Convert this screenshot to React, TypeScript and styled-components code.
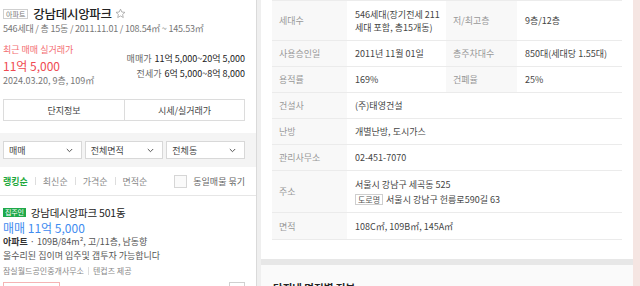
import styled, { createGlobalStyle } from "styled-components";

const Global = createGlobalStyle`
  html, body { margin: 0; padding: 0; background: #fff; }
  body {
    font-family: "Noto Sans CJK KR", "Noto Sans", sans-serif;
    color: #333;
    -webkit-font-smoothing: antialiased;
  }
`;

const Page = styled.div`
  display: flex;
  width: 640px;
  height: 286px;
  overflow: hidden;
`;

/* ---------- left: complex summary + listings ---------- */

const Left = styled.aside`
  width: 256px;
  flex-shrink: 0;
  border-right: 1px solid #dadada;
  background: #fff;
  overflow: hidden;
`;

const Head = styled.header`
  padding: 6px 11px 0 3px;
`;

const TitleRow = styled.div`
  display: flex;
  align-items: center;
  height: 15px;
`;

const TypeBadge = styled.span`
  border: 1px solid #cfcfcf;
  color: #777;
  font-size: 7px;
  line-height: 8px;
  padding: 0 2px;
  margin-right: 5px;
`;

const Title = styled.h1`
  margin: 0;
  font-size: 12.5px;
  font-weight: 500;
  color: #222;
  letter-spacing: -0.3px;
`;

const Star = styled.svg`
  margin-left: 3px;
`;

const Sub = styled.div`
  margin-top: 2px;
  font-size: 9px;
  line-height: 12px;
  color: #777;
  letter-spacing: -0.2px;
`;

const PriceBlock = styled.div`
  display: flex;
  justify-content: space-between;
  margin-top: 9px;
`;

const Recent = styled.div`
  display: flex;
  flex-direction: column;
`;

const RecentLabel = styled.div`
  font-size: 9px;
  line-height: 12px;
  color: #f36d72;
`;

const RecentPrice = styled.div`
  margin-top: 2px;
  font-size: 12px;
  line-height: 16px;
  color: #ef4a52;
`;

const RecentDate = styled.div`
  margin-top: 1px;
  font-size: 9px;
  line-height: 12px;
  color: #777;
`;

const Ranges = styled.div`
  margin-top: 7px;
  text-align: right;
  font-size: 9px;
  line-height: 15px;
  color: #222;
`;

const RangeLabel = styled.span`
  color: #666;
  margin-right: 3px;
`;

const Tabs = styled.div`
  display: grid;
  grid-template-columns: 1fr 1fr;
  margin: 12px 11px 0 3px;
  height: 22px;
  border: 1px solid #dcdcdc;
  box-sizing: border-box;
`;

const Tab = styled.button<{ $first?: boolean }>`
  all: unset;
  display: flex;
  align-items: center;
  justify-content: center;
  font-size: 9px;
  color: #444;
  border-left: ${(p) => (p.$first ? "none" : "1px solid #dcdcdc")};
`;

const FilterBar = styled.div`
  margin-top: 12px;
  height: 34px;
  box-sizing: border-box;
  padding: 8px 11px 0 3px;
  background: #f4f4f4;
  display: flex;
  gap: 3px;
`;

const Select = styled.div`
  flex: 1;
  height: 18px;
  box-sizing: border-box;
  border: 1px solid #d8d8d8;
  background: #fff;
  display: flex;
  align-items: center;
  justify-content: space-between;
  padding: 0 8px 0 5px;
  font-size: 9px;
  color: #444;
`;

const SortRow = styled.div`
  height: 29px;
  box-sizing: border-box;
  border-bottom: 1px solid #e6e6e6;
  padding: 0 11px 0 3px;
  display: flex;
  align-items: center;
  font-size: 9px;
  color: #888;
`;

const SortGroup = styled.span`
  display: flex;
  align-items: center;
`;

const SortItem = styled.span<{ $active?: boolean }>`
  color: ${(p) => (p.$active ? "#1ea83c" : "#888")};
  font-weight: ${(p) => (p.$active ? 700 : 400)};
`;

const Bar = styled.i<{ $gap?: number }>`
  width: 1px;
  height: 8px;
  background: #ddd;
  margin: 0 ${(p) => p.$gap ?? 7}px;
`;

const Check = styled.label`
  margin-left: auto;
  display: flex;
  align-items: center;
  gap: 6px;
  color: #666;
`;

const Box = styled.span`
  width: 11px;
  height: 11px;
  border: 1px solid #d6d6d6;
  background: #fafafa;
`;

const Listing = styled.article`
  padding: 9px 11px 0 3px;
`;

const ListTitle = styled.div`
  display: flex;
  align-items: center;
  height: 14px;
  font-size: 10.5px;
  color: #222;
  letter-spacing: -0.2px;
`;

const OwnerBadge = styled.span`
  background: #1fa94a;
  color: #fff;
  font-size: 7px;
  line-height: 9px;
  padding: 0 2px;
  margin-right: 5px;
`;

const ListPrice = styled.div`
  margin-top: 2px;
  font-size: 12px;
  line-height: 14px;
  color: #3f8cf0;
`;

const Meta = styled.div`
  font-size: 9px;
  line-height: 14px;
  color: #555;
  b {
    color: #333;
    font-weight: 700;
  }
`;

const Agent = styled.div`
  margin-top: 1px;
  font-size: 8px;
  line-height: 14px;
  color: #888;
  display: flex;
  align-items: center;
`;

const Tags = styled.div`
  margin-top: 4px;
  display: flex;
  justify-content: space-between;
`;

const Tag = styled.span<{ $w: number; $c: string }>`
  width: ${(p) => p.$w}px;
  height: 14px;
  border: 1px solid ${(p) => p.$c};
  box-sizing: border-box;
`;

/* ---------- right: complex info table ---------- */

const Gutter = styled.div`
  width: 4px;
  flex-shrink: 0;
  background: #efefef;
`;

const Detail = styled.main`
  width: 372px;
  flex-shrink: 0;
  background: #fff;
  display: flex;
  flex-direction: column;
`;

const Table = styled.div`
  margin: 0 11px;
  border-top: 1px solid #ececec;
  flex-shrink: 0;
`;

const Row = styled.div<{ $h: number }>`
  display: grid;
  grid-template-columns: 75px 99px 71px 105px;
  height: ${(p) => p.$h}px;
  border-bottom: 1px solid #ebebeb;
  font-size: 9px;
`;

const Label = styled.div`
  background: #f8f8f8;
  color: #999;
  display: flex;
  align-items: center;
  padding-left: 7px;
`;

const Value = styled.div<{ $wide?: boolean }>`
  grid-column: ${(p) => (p.$wide ? "span 3" : "auto")};
  color: #444;
  display: flex;
  flex-direction: column;
  justify-content: center;
  padding-left: 8px;
  line-height: 13px;
`;

const Road = styled.span`
  border: 1px solid #cfcfcf;
  padding: 0 2px;
  font-size: 8px;
  line-height: 9px;
  margin-right: 3px;
  color: #555;
`;

const Line = styled.div`
  display: flex;
  align-items: center;
  height: 15px;
`;

const Spacer = styled.div`
  flex: 1;
`;

const Band = styled.div`
  height: 6px;
  flex-shrink: 0;
  background: #e7e7e7;
`;

const NextSection = styled.section`
  height: 21px;
  flex-shrink: 0;
  overflow: hidden;
  background: #fafafa;
  padding: 16px 0 0 12px;
  box-sizing: border-box;
  font-size: 10.5px;
  font-weight: 700;
  color: #222;
  line-height: 14px;
`;

const Map = styled.div`
  flex: 1;
  background: #f5e5e2;
`;

const Chevron = () => (
  <svg width="7" height="5" viewBox="0 0 7 5">
    <path d="M0.8 1 L3.5 3.7 L6.2 1" fill="none" stroke="#555" strokeWidth="1" />
  </svg>
);

const filters = ["매매", "전체면적", "전체동"];
const sorts = ["랭킹순", "최신순", "가격순", "면적순"];

export default function App() {
  return (
    <>
      <Global />
      <Page>
        <Left>
          <Head>
            <TitleRow>
              <TypeBadge>아파트</TypeBadge>
              <Title>강남데시앙파크</Title>
              <Star width="11" height="11" viewBox="0 0 24 24">
                <path
                  d="M12 2.5l2.9 6.3 6.8.7-5.1 4.6 1.5 6.7L12 17.3l-6.1 3.5 1.5-6.7-5.1-4.6 6.8-.7z"
                  fill="none"
                  stroke="#999"
                  strokeWidth="1.6"
                  strokeLinejoin="round"
                />
              </Star>
            </TitleRow>
            <Sub>546세대 / 총 15동 / 2011.11.01 / 108.54㎡ ~ 145.53㎡</Sub>
            <PriceBlock>
              <Recent>
                <RecentLabel>최근 매매 실거래가</RecentLabel>
                <RecentPrice>11억 5,000</RecentPrice>
                <RecentDate>2024.03.20, 9층, 109㎡</RecentDate>
              </Recent>
              <Ranges>
                <div>
                  <RangeLabel>매매가</RangeLabel>11억 5,000~20억 5,000
                </div>
                <div>
                  <RangeLabel>전세가</RangeLabel>6억 5,000~8억 8,000
                </div>
              </Ranges>
            </PriceBlock>
          </Head>
          <Tabs>
            <Tab $first>단지정보</Tab>
            <Tab>시세/실거래가</Tab>
          </Tabs>
          <FilterBar>
            {filters.map((f) => (
              <Select key={f}>
                {f}
                <Chevron />
              </Select>
            ))}
          </FilterBar>
          <SortRow>
            {sorts.map((s, i) => (
              <SortGroup key={s}>
                {i > 0 && <Bar />}
                <SortItem $active={i === 0}>{s}</SortItem>
              </SortGroup>
            ))}
            <Check>
              <Box />
              동일매물 묶기
            </Check>
          </SortRow>
          <Listing>
            <ListTitle>
              <OwnerBadge>집주인</OwnerBadge>
              강남데시앙파크 501동
            </ListTitle>
            <ListPrice>매매 11억 5,000</ListPrice>
            <Meta>
              <b>아파트</b> · 109B/84m², 고/11층, 남동향
            </Meta>
            <Meta>올수리된 집이며 입주및 갭투자 가능합니다</Meta>
            <Agent>
              잠실월드공인중개사무소
              <Bar $gap={4} />
              텐컵즈 제공
            </Agent>
            <Tags>
              <Tag $w={57} $c="#f5b4b4" />
              <Tag $w={16} $c="#d0d0d0" />
            </Tags>
          </Listing>
        </Left>
        <Gutter />
        <Detail>
          <Table>
            <Row $h={39}>
              <Label>세대수</Label>
              <Value>
                <div>546세대(장기전세 211</div>
                <div>세대 포함, 총15개동)</div>
              </Value>
              <Label>저/최고층</Label>
              <Value>9층/12층</Value>
            </Row>
            <Row $h={25}>
              <Label>사용승인일</Label>
              <Value>2011년 11월 01일</Value>
              <Label>총주차대수</Label>
              <Value>850대(세대당 1.55대)</Value>
            </Row>
            <Row $h={25}>
              <Label>용적률</Label>
              <Value>169%</Value>
              <Label>건폐율</Label>
              <Value>25%</Value>
            </Row>
            <Row $h={25}>
              <Label>건설사</Label>
              <Value $wide>(주)태영건설</Value>
            </Row>
            <Row $h={25}>
              <Label>난방</Label>
              <Value $wide>개별난방, 도시가스</Value>
            </Row>
            <Row $h={25}>
              <Label>관리사무소</Label>
              <Value $wide>02-451-7070</Value>
            </Row>
            <Row $h={41}>
              <Label>주소</Label>
              <Value $wide>
                <Line>서울시 강남구 세곡동 525</Line>
                <Line>
                  <Road>도로명</Road>서울시 강남구 헌릉로590길 63
                </Line>
              </Value>
            </Row>
            <Row $h={26}>
              <Label>면적</Label>
              <Value $wide>108C㎡, 109B㎡, 145A㎡</Value>
            </Row>
          </Table>
          <Spacer />
          <Band />
          <NextSection>단지내 면적별 정보</NextSection>
        </Detail>
        <Map />
      </Page>
    </>
  );
}
